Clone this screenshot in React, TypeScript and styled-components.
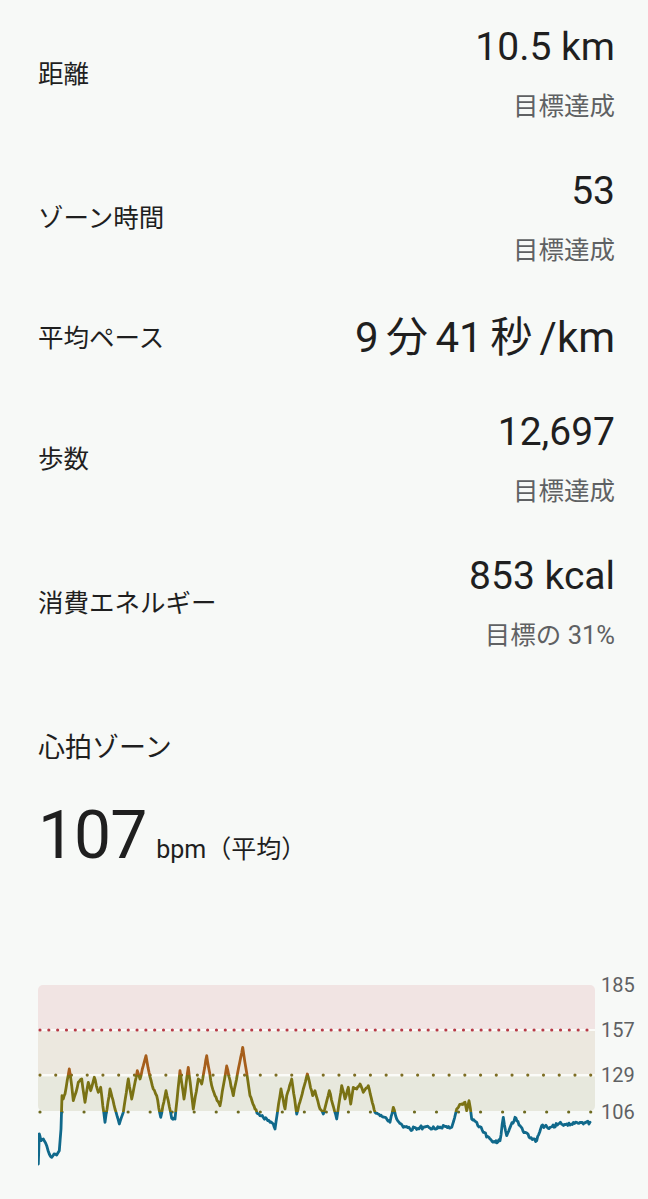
import React, { FC } from 'react'
import styled, { createGlobalStyle } from 'styled-components'

const GlobalStyle = createGlobalStyle`
  html, body {
    margin: 0;
    background: #f7f9f7;
  }
  body {
    font-family: Roboto, "Noto Sans CJK JP", sans-serif;
    color: #1f1f1f;
  }
`

interface StatItem {
  label: string
  value: string
  sub?: string
  big?: boolean
}

const STATS: StatItem[] = [
  { label: '距離', value: '10.5 km', sub: '目標達成' },
  { label: 'ゾーン時間', value: '53', sub: '目標達成' },
  { label: '平均ペース', value: '9 分 41 秒 /km', big: true },
  { label: '歩数', value: '12,697', sub: '目標達成' },
  { label: '消費エネルギー', value: '853 kcal', sub: '目標の 31%' },
]

// 心拍の推移（ページ座標で拾った主要点）
const HR_KEYS: [number, number][] = [
  [38.3, 1165], [39.3, 1135], [41, 1141.7], [43.3, 1140], [46.7, 1146.7], [49.3, 1155],
  [51.7, 1158.3], [54, 1155], [56.7, 1156], [59.3, 1151.7], [61, 1130], [62, 1096.7],
  [63.3, 1100], [65, 1095], [69.3, 1070], [71.7, 1086.7], [73.3, 1101.7], [76, 1093.3],
  [78.3, 1083.3], [81.7, 1080], [85, 1103.3], [88.3, 1083.3], [90.7, 1091.7], [94.3, 1078.3],
  [98.3, 1093.3], [100.7, 1088.3], [105, 1123.3], [110, 1090], [115, 1110], [119.3, 1125],
  [123.3, 1113.3], [128.3, 1080], [131.7, 1100], [137.3, 1071.7], [140, 1080], [143.3, 1066.7],
  [146, 1056.7], [149, 1073.3], [153.3, 1090], [156.7, 1096.7], [160.7, 1118.3], [166, 1091.7],
  [171.7, 1119.3], [175, 1120], [180, 1071.7], [184, 1100], [188.3, 1068.3], [193.3, 1110],
  [198.3, 1080], [201.7, 1085], [206.7, 1056.7], [211.7, 1086.7], [215, 1096.7], [220, 1106.7],
  [226.7, 1067], [233.3, 1096.7], [242.7, 1048.3], [250, 1096.7], [255, 1110], [260, 1116.7],
  [266.7, 1120], [273.3, 1125], [275, 1130], [281, 1090], [285, 1110], [286.7, 1096.7],
  [291.7, 1080], [296.7, 1115], [303.3, 1090], [307.3, 1075], [312.7, 1096.7], [315, 1091.7],
  [320, 1110], [323.3, 1115], [329.3, 1091.7], [336.7, 1120], [341.7, 1086.7], [345, 1100],
  [348.3, 1088.3], [350.7, 1105], [353.3, 1088.3], [356.7, 1090], [360, 1085], [363.3, 1093.3],
  [368.3, 1086.7], [373.3, 1106.7], [375, 1113.3], [380, 1116.7], [385, 1118.3], [390, 1123.3],
  [393.3, 1108.3], [396.7, 1120], [403.3, 1128.3], [410, 1130], [420, 1128.3], [430, 1129],
  [440, 1128], [451.7, 1128.3], [456.7, 1110], [461.7, 1105], [465, 1103.3], [466.7, 1111.7],
  [469, 1101.7], [471.7, 1120], [476.7, 1123.3], [483.3, 1133.3], [490, 1140], [495, 1143.3],
  [500, 1141.7], [503.3, 1118.3], [506.7, 1136.7], [515, 1118.3], [520, 1126.7], [525, 1133.3],
  [533.3, 1140], [536.7, 1141.7], [541.7, 1126.7], [550, 1128.3], [558.3, 1125], [566.7, 1125],
  [576.7, 1123.3], [583.3, 1125], [590, 1123.3],
]

const OX = 38
const OY = 975

const jitter = (x: number) => {
  const s = Math.sin(x * 12.9898 + 4.1) * 43758.5453
  return s - Math.floor(s) - 0.5
}

const buildTrace = () => {
  const pts: string[] = []
  for (let i = 0; i < HR_KEYS.length - 1; i++) {
    const [x0, y0] = HR_KEYS[i]
    const [x1, y1] = HR_KEYS[i + 1]
    const steps = Math.max(1, Math.round((x1 - x0) / 1.1))
    for (let s = 0; s < steps; s++) {
      const t = s / steps
      const x = x0 + (x1 - x0) * t
      const amp = x > 400 || (x > 255 && x < 280) ? 3.4 : 1.8
      const y = y0 + (y1 - y0) * t + (s === 0 ? 0 : jitter(x) * amp)
      pts.push(`${(x - OX).toFixed(1)},${(y - OY).toFixed(1)}`)
    }
  }
  const [lx, ly] = HR_KEYS[HR_KEYS.length - 1]
  pts.push(`${lx - OX},${ly - OY}`)
  return pts.join(' ')
}

const TRACE = buildTrace()

const Page = styled.main`
  width: 648px;
  padding-top: 25px;
  padding-bottom: 24px;
`

const StatList = styled.section`
  display: flex;
  flex-direction: column;
  gap: 47px;
  padding: 0 33px 0 38px;
`

const StatRow = styled.div`
  display: flex;
  align-items: center;
  justify-content: space-between;
`

const Label = styled.div`
  font-size: 25.5px;
  line-height: 32px;
  color: #1f1f1f;
`

const ValueCol = styled.div`
  display: flex;
  flex-direction: column;
  align-items: flex-end;
  gap: 21px;
`

const Value = styled.div<{ $big?: boolean }>`
  font-size: ${(p) => (p.$big ? 42 : 39)}px;
  line-height: ${(p) => (p.$big ? 50 : 44)}px;
  word-spacing: ${(p) => (p.$big ? -3 : 0)}px;
  color: #1f1f1f;
  white-space: nowrap;
`

const Sub = styled.div`
  font-size: 25.5px;
  line-height: 32px;
  color: #5f6163;
`

const HeartSection = styled.section`
  padding: 0 33px 0 38px;
  margin-top: 79px;
`

const HeartTitle = styled.h2`
  margin: 0;
  font-size: 27px;
  line-height: 36px;
  font-weight: 400;
`

const HeartValue = styled.div`
  display: flex;
  align-items: baseline;
  margin-top: 34px;
`

const BigNumber = styled.span`
  font-size: 66px;
  line-height: 72px;
  letter-spacing: -1px;
`

const BigUnit = styled.span`
  font-size: 25px;
  margin-left: 10px;
`

const ChartWrap = styled.div`
  margin-top: 102px;
  padding-left: ${OX}px;
`

const AxisText = styled.text`
  font-family: Roboto, sans-serif;
  font-size: 20px;
  fill: #5f6163;
`

const BAND_R = 557
const yOf = (v: number) => 986 + ((185 - v) * 127) / 79 - OY

const DotLine: FC<{ y: number; n: number; x0: number; x1: number; color: string }> = ({
  y,
  n,
  x0,
  x1,
  color,
}) => (
  <g fill={color}>
    {Array.from({ length: n + 1 }, (_, i) => (
      <circle key={i} cx={x0 + ((x1 - x0) * i) / n} cy={y} r={1.6} />
    ))}
  </g>
)

const HeartChart: FC = () => {
  const y185 = yOf(185)
  const y157 = yOf(157)
  const y129 = yOf(129)
  const y106 = yOf(106)
  return (
    <svg width={610} height={200} viewBox='0 0 610 200'>
      <defs>
        <clipPath id='zone-low'>
          <rect x={0} y={y106} width={610} height={200} />
        </clipPath>
        <clipPath id='zone-mid'>
          <rect x={0} y={y129} width={610} height={y106 - y129} />
        </clipPath>
        <clipPath id='zone-high'>
          <rect x={0} y={0} width={610} height={y129} />
        </clipPath>
        <clipPath id='band-shape'>
          <rect x={0} y={y185} width={BAND_R} height={y106 - y185 - 1} rx={5} />
        </clipPath>
      </defs>
      <g clipPath='url(#band-shape)'>
        <rect x={0} y={y185} width={BAND_R} height={y157 - y185} fill='#f1e4e3' />
        <rect x={0} y={y157} width={BAND_R} height={y129 - y157} fill='#ece8df' />
        <rect x={0} y={y129} width={BAND_R} height={y106 - y129} fill='#e7e8dd' />
        <rect x={0} y={y157 - 1} width={BAND_R} height={2} fill='#fbfbf8' />
        <rect x={0} y={y129 - 1} width={BAND_R} height={2.4} fill='#fbfbf8' />
      </g>
      <DotLine y={y157} n={62} x0={2} x1={549} color='#b73a46' />
      <DotLine y={y129} n={35} x0={2} x1={552.7} color='#7d6d22' />
      <DotLine y={y106} n={25} x0={2} x1={552.7} color='#6d6a20' />
      <g fill='none' strokeWidth={2.8} strokeLinejoin='round' strokeLinecap='round'>
        <polyline points={TRACE} stroke='#10698b' clipPath='url(#zone-low)' />
        <polyline points={TRACE} stroke='#7a7214' clipPath='url(#zone-mid)' />
        <polyline points={TRACE} stroke='#a65e1b' clipPath='url(#zone-high)' />
      </g>
      {[185, 157, 129, 106].map((v) => (
        <AxisText key={v} x={563} y={yOf(v) + 7}>
          {v}
        </AxisText>
      ))}
    </svg>
  )
}

const App: FC = () => (
  <Page>
    <GlobalStyle />
    <StatList>
      {STATS.map((item) => (
        <StatRow key={item.label}>
          <Label>{item.label}</Label>
          <ValueCol>
            <Value $big={item.big}>{item.value}</Value>
            {item.sub && <Sub>{item.sub}</Sub>}
          </ValueCol>
        </StatRow>
      ))}
    </StatList>
    <HeartSection>
      <HeartTitle>心拍ゾーン</HeartTitle>
      <HeartValue>
        <BigNumber>107</BigNumber>
        <BigUnit>bpm（平均）</BigUnit>
      </HeartValue>
    </HeartSection>
    <ChartWrap>
      <HeartChart />
    </ChartWrap>
  </Page>
)

export default App
